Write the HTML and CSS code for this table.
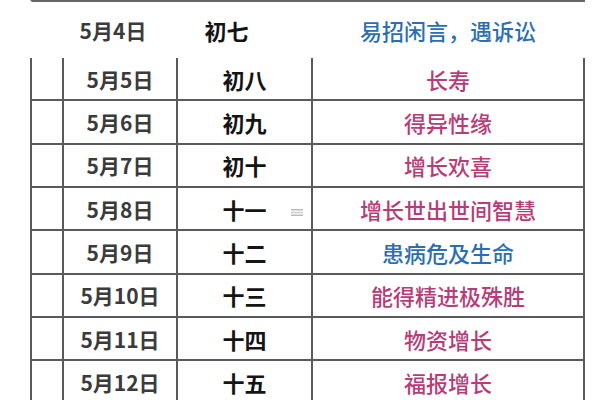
FILE: index.html
```html
<!DOCTYPE html>
<html lang="zh-CN">
<head>
<meta charset="utf-8">
<link rel="stylesheet" href="styles.css">
</head>
<body>
<div class="table">
  <div class="row first">
    <div class="c idx"></div>
    <div class="c date shift-date">5月4日</div>
    <div class="c lunar shift-lunar">初七</div>
    <div class="c desc blue">易招闲言，遇诉讼</div>
  </div>
  <div class="row">
    <div class="c idx"></div>
    <div class="c date">5月5日</div>
    <div class="c lunar">初八</div>
    <div class="c desc pink">长寿</div>
  </div>
  <div class="row">
    <div class="c idx"></div>
    <div class="c date">5月6日</div>
    <div class="c lunar">初九</div>
    <div class="c desc pink">得异性缘</div>
  </div>
  <div class="row">
    <div class="c idx"></div>
    <div class="c date">5月7日</div>
    <div class="c lunar">初十</div>
    <div class="c desc pink">增长欢喜</div>
  </div>
  <div class="row">
    <div class="c idx"></div>
    <div class="c date">5月8日</div>
    <div class="c lunar">十一<svg class="mark" width="12" height="7" viewBox="0 0 12 7"><rect x="0" y="0" width="12" height="1.5" fill="#bbb"/><rect x="0" y="2.8" width="12" height="1.5" fill="#ccc"/><rect x="0" y="5.5" width="12" height="1.5" fill="#bbb"/></svg></div>
    <div class="c desc pink">增长世出世间智慧</div>
  </div>
  <div class="row">
    <div class="c idx"></div>
    <div class="c date">5月9日</div>
    <div class="c lunar">十二</div>
    <div class="c desc blue">患病危及生命</div>
  </div>
  <div class="row">
    <div class="c idx"></div>
    <div class="c date">5月10日</div>
    <div class="c lunar">十三</div>
    <div class="c desc pink">能得精进极殊胜</div>
  </div>
  <div class="row">
    <div class="c idx"></div>
    <div class="c date">5月11日</div>
    <div class="c lunar">十四</div>
    <div class="c desc pink">物资增长</div>
  </div>
  <div class="row">
    <div class="c idx"></div>
    <div class="c date">5月12日</div>
    <div class="c lunar">十五</div>
    <div class="c desc pink">福报增长</div>
  </div>
</div>
</body>
</html>
```
FILE: styles.css
```css
html, body {
  margin: 0;
  padding: 0;
  background: #ffffff;
  overflow: hidden;
}
body {
  width: 600px;
  height: 400px;
  font-family: "Noto Sans CJK SC", "Noto Sans", sans-serif;
}
.table {
  margin-left: 30px;
  width: 555px;
}
.row {
  display: grid;
  grid-template-columns: 32px 114px 135px 272px;
  height: 43.33px;
  box-sizing: border-box;
  border-left: 2px solid #5a5a5a;
  border-bottom: 2px solid #5a5a5a;
}
.row .c {
  box-sizing: border-box;
  border-right: 2px solid #5a5a5a;
  display: flex;
  align-items: center;
  justify-content: center;
  position: relative;
  white-space: nowrap;
}
.row.first {
  height: 58px;
  border-top: 2px solid #666;
  border-left-color: transparent;
  border-bottom: none;
  padding-bottom: 1px;
}
.row.first .c {
  border-right-color: transparent;
}
.date {
  font-size: 21px;
  font-weight: 700;
  color: #3b3b3b;
}
.lunar {
  font-size: 22px;
  font-weight: 700;
  color: #141414;
}
.desc {
  font-size: 22px;
  font-weight: 500;
}
.pink { color: #b83c78; }
.blue { color: #2b6fb2; }
.shift-date { padding-right: 14px; }
.shift-lunar { padding-right: 36px; }
.mark {
  position: absolute;
  right: 8px;
  top: 21px;
}
```
